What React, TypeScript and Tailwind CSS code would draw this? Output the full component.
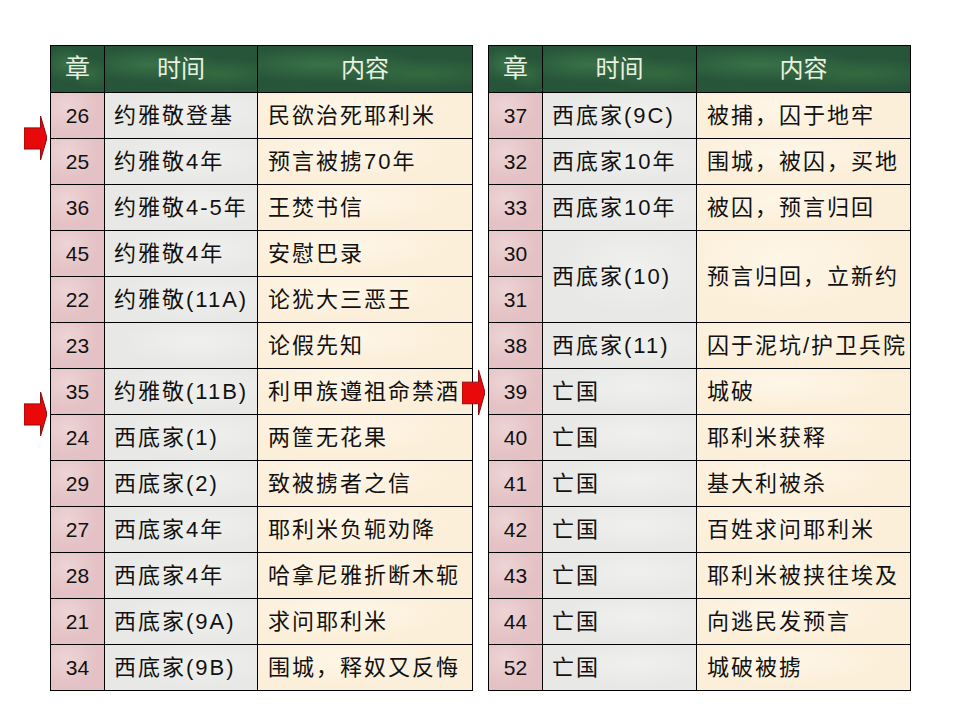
import React from 'react'

type Row = { ch: string[]; time: string; text: string }

const LEFT: Row[] = [
  { ch: ['26'], time: '约雅敬登基', text: '民欲治死耶利米' },
  { ch: ['25'], time: '约雅敬4年', text: '预言被掳70年' },
  { ch: ['36'], time: '约雅敬4-5年', text: '王焚书信' },
  { ch: ['45'], time: '约雅敬4年', text: '安慰巴录' },
  { ch: ['22'], time: '约雅敬(11A)', text: '论犹大三恶王' },
  { ch: ['23'], time: '', text: '论假先知' },
  { ch: ['35'], time: '约雅敬(11B)', text: '利甲族遵祖命禁酒' },
  { ch: ['24'], time: '西底家(1)', text: '两筐无花果' },
  { ch: ['29'], time: '西底家(2)', text: '致被掳者之信' },
  { ch: ['27'], time: '西底家4年', text: '耶利米负轭劝降' },
  { ch: ['28'], time: '西底家4年', text: '哈拿尼雅折断木轭' },
  { ch: ['21'], time: '西底家(9A)', text: '求问耶利米' },
  { ch: ['34'], time: '西底家(9B)', text: '围城，释奴又反悔' },
]

const RIGHT: Row[] = [
  { ch: ['37'], time: '西底家(9C)', text: '被捕，囚于地牢' },
  { ch: ['32'], time: '西底家10年', text: '围城，被囚，买地' },
  { ch: ['33'], time: '西底家10年', text: '被囚，预言归回' },
  { ch: ['30', '31'], time: '西底家(10)', text: '预言归回，立新约' },
  { ch: ['38'], time: '西底家(11)', text: '囚于泥坑/护卫兵院' },
  { ch: ['39'], time: '亡国', text: '城破' },
  { ch: ['40'], time: '亡国', text: '耶利米获释' },
  { ch: ['41'], time: '亡国', text: '基大利被杀' },
  { ch: ['42'], time: '亡国', text: '百姓求问耶利米' },
  { ch: ['43'], time: '亡国', text: '耶利米被挟往埃及' },
  { ch: ['44'], time: '亡国', text: '向逃民发预言' },
  { ch: ['52'], time: '亡国', text: '城破被掳' },
]

const font = 'font-["Liberation_Sans","Noto_Sans_CJK_SC",sans-serif]'
const headBg =
  'bg-[#27553a] bg-[radial-gradient(ellipse_at_30%_40%,#3a7248_0%,transparent_45%),radial-gradient(ellipse_at_75%_60%,#346a40_0%,transparent_40%)]'
const pinkBg = 'bg-[#e4c1c4] bg-[radial-gradient(ellipse_at_30%_30%,#edd4d5_0%,transparent_60%)]'
const grayBg = 'bg-[#e8e8e7] bg-[radial-gradient(ellipse_at_60%_40%,#f0f0ef_0%,transparent_60%)]'
const creamBg = 'bg-[#fcefd9] bg-[radial-gradient(ellipse_at_40%_30%,#fef6e8_0%,transparent_60%)]'

function Header() {
  return (
    <>
      <div className={`${headBg} flex items-center justify-center text-[25px] text-[#e9f1e2]`}>章</div>
      <div className={`${headBg} flex items-center justify-center text-[24px] text-[#e9f1e2]`}>时间</div>
      <div className={`${headBg} flex items-center justify-center text-[24px] text-[#e9f1e2]`}>内容</div>
    </>
  )
}

function Table({ rows, cols }: { rows: Row[]; cols: string }) {
  return (
    <div className={`grid ${cols} grid-rows-[46px_repeat(13,45px)] gap-px bg-black p-px ${font} text-[#111]`}>
      <Header />
      {rows.map((r, i) => {
        const span = r.ch.length > 1 ? 'row-span-2' : ''
        return (
          <React.Fragment key={i}>
            {r.ch.length > 1 ? (
              <div className="row-span-2 flex flex-col gap-px">
                {r.ch.map((c) => (
                  <div key={c} className={`${pinkBg} flex flex-1 items-center justify-center text-[21px]`}>
                    {c}
                  </div>
                ))}
              </div>
            ) : (
              <div className={`${pinkBg} flex items-center justify-center text-[21px]`}>{r.ch[0]}</div>
            )}
            <div className={`${grayBg} ${span} flex items-center pl-[9px] text-[22px] tracking-[2px] whitespace-nowrap`}>
              {r.time}
            </div>
            <div className={`${creamBg} ${span} flex items-center pl-[10px] text-[22px] tracking-[2px] whitespace-nowrap`}>
              {r.text}
            </div>
          </React.Fragment>
        )
      })}
    </div>
  )
}

function Arrow({ className, w, h }: { className: string; w: number; h: number }) {
  const bodyEnd = w * 0.72
  const top = h * 0.27
  const bot = h * 0.75
  return (
    <svg className={`absolute ${className}`} width={w} height={h} viewBox={`0 0 ${w} ${h}`}>
      <path
        d={`M0 ${top} H${bodyEnd} V0 L${w} ${h / 2} L${bodyEnd} ${h} V${bot} H0 Z`}
        fill="#e80a0a"
        stroke="#8a0b0b"
        strokeWidth="1"
      />
    </svg>
  )
}

export default function App() {
  return (
    <div className="relative w-[960px] h-[720px] bg-white">
      <div className="flex items-start gap-[15px] pl-[50px] pt-[45px]">
        <Table rows={LEFT} cols="grid-cols-[53px_152px_214px]" />
        <Table rows={RIGHT} cols="grid-cols-[53px_153px_213px]" />
      </div>
      <Arrow className="left-[24px] top-[116px]" w={23} h={44} />
      <Arrow className="left-[24px] top-[392px]" w={23} h={44} />
      <Arrow className="left-[462px] top-[370px]" w={23} h={45} />
    </div>
  )
}
